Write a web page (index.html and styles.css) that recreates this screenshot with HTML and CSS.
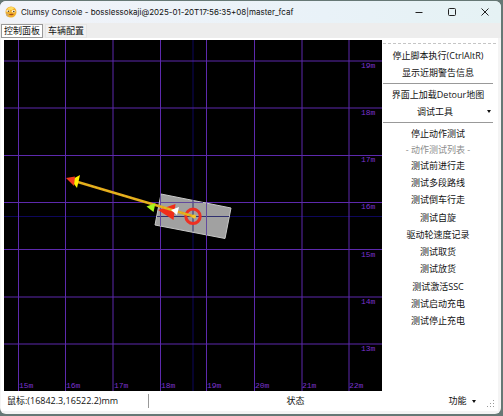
FILE: index.html
```html
<!DOCTYPE html>
<html lang="zh-CN">
<head>
<meta charset="utf-8">
<title>Clumsy Console</title>
<link rel="stylesheet" href="styles.css">
</head>
<body>
<div class="window">
  <header class="titlebar">
    <svg class="logo" viewBox="0 0 12 12" aria-hidden="true">
      <circle cx="6" cy="6" r="5.5" fill="#f0ae2b"/>
      <path d="M1.500 3.500Q5.500 -.5 9.500 2L7 4Z" fill="#ffdc62"/>
      <ellipse cx="3" cy="5" rx="1.800" ry="1.100" fill="#fff6dc"/>
      <ellipse cx="8.500" cy="5.300" rx="1.700" ry="1.300" fill="#fff6dc"/>
      <circle cx="3.400" cy="5.200" r=".7" fill="#433422"/>
      <circle cx="8.800" cy="5.500" r=".8" fill="#433422"/>
      <path d="M3.500 8.500Q6 7.300 8.800 8L8 9Q5.500 9.500 3.500 8.500Z" fill="#a54d1c"/>
      <path d="M.8 7.200L3.800 8.300L3 10.800Q.8 10 .8 7.200Z" fill="#c9a870"/>
    </svg>
    <h1 class="title">Clumsy Console - bosslessokaji@2025-01-20T17:56:35+08|master_fcaf</h1>
    <div class="window-buttons">
      <button type="button" aria-label="最小化"><svg viewBox="0 0 8 8"><path d="M.5 4.500H7.500"/></svg></button>
      <button type="button" aria-label="最大化"><svg viewBox="0 0 8 8"><rect x=".5" y=".5" width="7" height="7" rx="1"/></svg></button>
      <button type="button" aria-label="关闭"><svg viewBox="0 0 8 8"><path d="M.5 .5L7.500 7.500M7.500 .5L.5 7.500"/></svg></button>
    </div>
  </header>
  <nav class="tabs">
    <button type="button" class="tab tab-active">控制面板</button>
    <button type="button" class="tab">车辆配置</button>
  </nav>
  <main class="content">
    <svg class="map" viewBox="4 40 378 351" preserveAspectRatio="xMidYMid slice" role="img" aria-label="地图">
      <path class="axis" d="M193 40V391M4 216.500H382"/>
      <path class="grid" d="M18.500 40V391M65.500 40V391M113 40V391M160.500 40V391M206.500 40V391M254.500 40V391M302 40V391M349 40V391M4 61H382M4 108H382M4 155.500H382M4 202.500H382M4 249.500H382M4 297H382M4 344H382"/>
      <g class="scale">
        <text x="19" y="388">15m</text><text x="66" y="388">16m</text><text x="114" y="388">17m</text><text x="161" y="388">18m</text><text x="207" y="388">19m</text><text x="255" y="388">20m</text><text x="302" y="388">21m</text><text x="349" y="388">22m</text>
        <text x="361" y="68">19m</text><text x="361" y="115">18m</text><text x="361" y="162">17m</text><text x="361" y="209">16m</text><text x="361" y="257">15m</text><text x="361" y="304">14m</text><text x="361" y="351">13m</text>
      </g>
      <path d="M161 194L231 208L225 238.500L155 225Z" fill="#a1a1a1" stroke="#c8c8c8"/>
      <path class="axis-over" d="M193 200V231.500M157 216.500H229"/>
      <path class="grid-over" d="M160.500 194V226M206.500 203V235M160 202.500H203"/>
      <circle cx="193" cy="216.300" r="7.200" fill="none" stroke="#ed3023" stroke-width="3"/>
      <path d="M158 210L175.500 204L173.500 220Z" fill="#f02d19"/>
      <path d="M71 180L194 216.500" stroke="#eaa51b" stroke-width="2.400"/>
      <path d="M76 181.500L194 216.500" stroke="#c8d828" stroke-width=".8" stroke-dasharray="2 2"/>
      <path d="M171 210L179 207L177 215Z" fill="#fff"/>
      <path d="M71 180L80 175L77 188Z" fill="#fff000"/>
      <path d="M66 178L75 176.500L74 186Z" fill="#f13a1f"/>
      <path d="M146.500 206.500L155.500 203L153.500 212Z" fill="#a5f51e"/>
      <circle cx="194" cy="216.500" r="2" fill="#f5c529"/>
    </svg>
    <aside class="panel">
      <div class="panel-head">
        <button type="button">停止脚本执行(CtrlAltR)</button>
        <button type="button">显示近期警告信息</button>
      </div>
      <div class="panel-tools">
        <button type="button">界面上加载Detour地图</button>
        <button type="button" class="has-menu">调试工具<span class="caret"></span></button>
      </div>
      <div class="panel-tests">
        <button type="button">停止动作测试</button>
        <p class="list-label">- 动作测试列表 -</p>
        <div class="test-list">
          <button type="button">测试前进行走</button>
          <button type="button">测试多段路线</button>
          <button type="button">测试倒车行走</button>
          <button type="button">测试自旋</button>
          <button type="button">驱动轮速度记录</button>
          <button type="button">测试取货</button>
          <button type="button">测试放货</button>
          <button type="button">测试激活SSC</button>
          <button type="button">测试启动充电</button>
          <button type="button">测试停止充电</button>
        </div>
      </div>
    </aside>
  </main>
  <footer class="statusbar">
    <span class="mouse">鼠标:(16842.3,16522.2)mm</span>
    <span class="state">状态</span>
    <button type="button" class="functions">功能<span class="caret"></span></button>
    <svg class="grip" viewBox="0 0 8 8" aria-hidden="true"><path d="M6 0h1v1h-1zM3 3h1v1h-1zM6 3h1v1h-1zM0 6h1v1h-1zM3 6h1v1h-1zM6 6h1v1h-1z"/></svg>
  </footer>
</div>
</body>
</html>
```
FILE: styles.css
```css
* { box-sizing: border-box; }

body {
  margin: 0;
  padding: 1px 2px 2px 0;
  min-height: 100vh;
  display: flex;
  background: #667875;
  color: #111;
  font: 9px/12px "Open Sans", "Noto Sans CJK SC", sans-serif;
}

button {
  margin: 0;
  padding: 0;
  border: 0;
  background: none;
  color: inherit;
  font: inherit;
  white-space: nowrap;
}

.window {
  flex: 1;
  min-width: 0;
  display: flex;
  flex-direction: column;
  overflow: hidden;
  border-radius: 6px;
  background: #f4f4f4;
}

.titlebar {
  display: flex;
  align-items: center;
  height: 22px;
  padding-left: 5px;
  background: linear-gradient(90deg, #f1f3f9, #e9f2f8 65%, #e5f2f4);
}

.logo {
  width: 12px;
  height: 12px;
  margin-right: 4px;
}

.title {
  flex: 1;
  margin: 0;
  font-family: Inter, sans-serif;
  font-size: 8px;
  font-weight: 400;
  white-space: nowrap;
}

.window-buttons { display: flex; }

.window-buttons button {
  display: grid;
  place-items: center;
  width: 33px;
  height: 20px;
}

.window-buttons svg {
  width: 8px;
  height: 8px;
  fill: none;
  stroke: #222;
}

.tabs {
  display: flex;
  height: 15px;
  padding: 1px 1px 0;
  background: #ededed;
}

.tab {
  width: 42px;
  padding: 0 2px;
  border: 1px solid #e5e5e5;
  background: #f1f1f1;
  line-height: 10px;
}

.tab + .tab { margin-left: 2px; }

.tab-active {
  border: 1px solid #999;
  background: #fff;
}

.content {
  flex: 1;
  min-height: 0;
  display: grid;
  grid-template-columns: 1fr 116px;
  margin: 0 3px 0 1px;
  padding: 2px 0 0 3px;
  background: #fff;
}

.map {
  width: 100%;
  height: 100%;
  min-height: 0;
  background: #000;
}

.grid { stroke: #5d29ad; fill: none; }
.axis { stroke: #0d075c; fill: none; }
.grid-over { stroke: #634a9e; fill: none; }
.axis-over { stroke: #30306f; fill: none; }

.scale {
  fill: #7a32cc;
  font: 8px "Liberation Mono", monospace;
}

.panel {
  display: flex;
  flex-direction: column;
  min-width: 0;
  margin: 3px 2px 0 1px;
  border-top: 1px dashed #c5c5c5;
}

.panel button { text-align: center; }

.panel-head,
.panel-tools {
  display: grid;
  grid-auto-rows: 17px;
  padding: 3px 0 2px;
  margin-right: 3px;
  border-bottom: 1px solid #999;
}

.panel-tools { padding-top: 2px; }

.panel-tests {
  display: grid;
  grid-template-rows: 17px 15px auto;
  margin-right: 3px;
  padding-top: 2px;
}

.list-label {
  margin: 0;
  text-align: center;
  line-height: 15px;
  color: #8d8d8d;
}

.test-list {
  display: grid;
  grid-template-rows: repeat(10, 1fr);
  height: 173px;
}

.panel .has-menu {
  display: grid;
  grid-template-columns: 1fr 6px;
  align-items: center;
}

.caret {
  display: inline-block;
  width: 4px;
  border: 2px solid transparent;
  border-top: 3px solid #111;
  border-bottom: 0;
}

.statusbar {
  display: grid;
  grid-template-columns: 145px 1fr 40px 16px;
  align-items: center;
  height: 20px;
  margin: 0 3px 3px 1px;
  padding-left: 3px;
  background: #fff;
}

.mouse {
  height: 14px;
  padding-left: 3px;
  border-right: 1px solid #999;
  line-height: 14px;
  white-space: nowrap;
}

.state { text-align: center; }

.functions {
  display: flex;
  align-items: center;
  justify-content: center;
  gap: 5px;
}

.grip {
  width: 8px;
  height: 8px;
  margin: 6px 0 0 5px;
  fill: #999;
}
```
